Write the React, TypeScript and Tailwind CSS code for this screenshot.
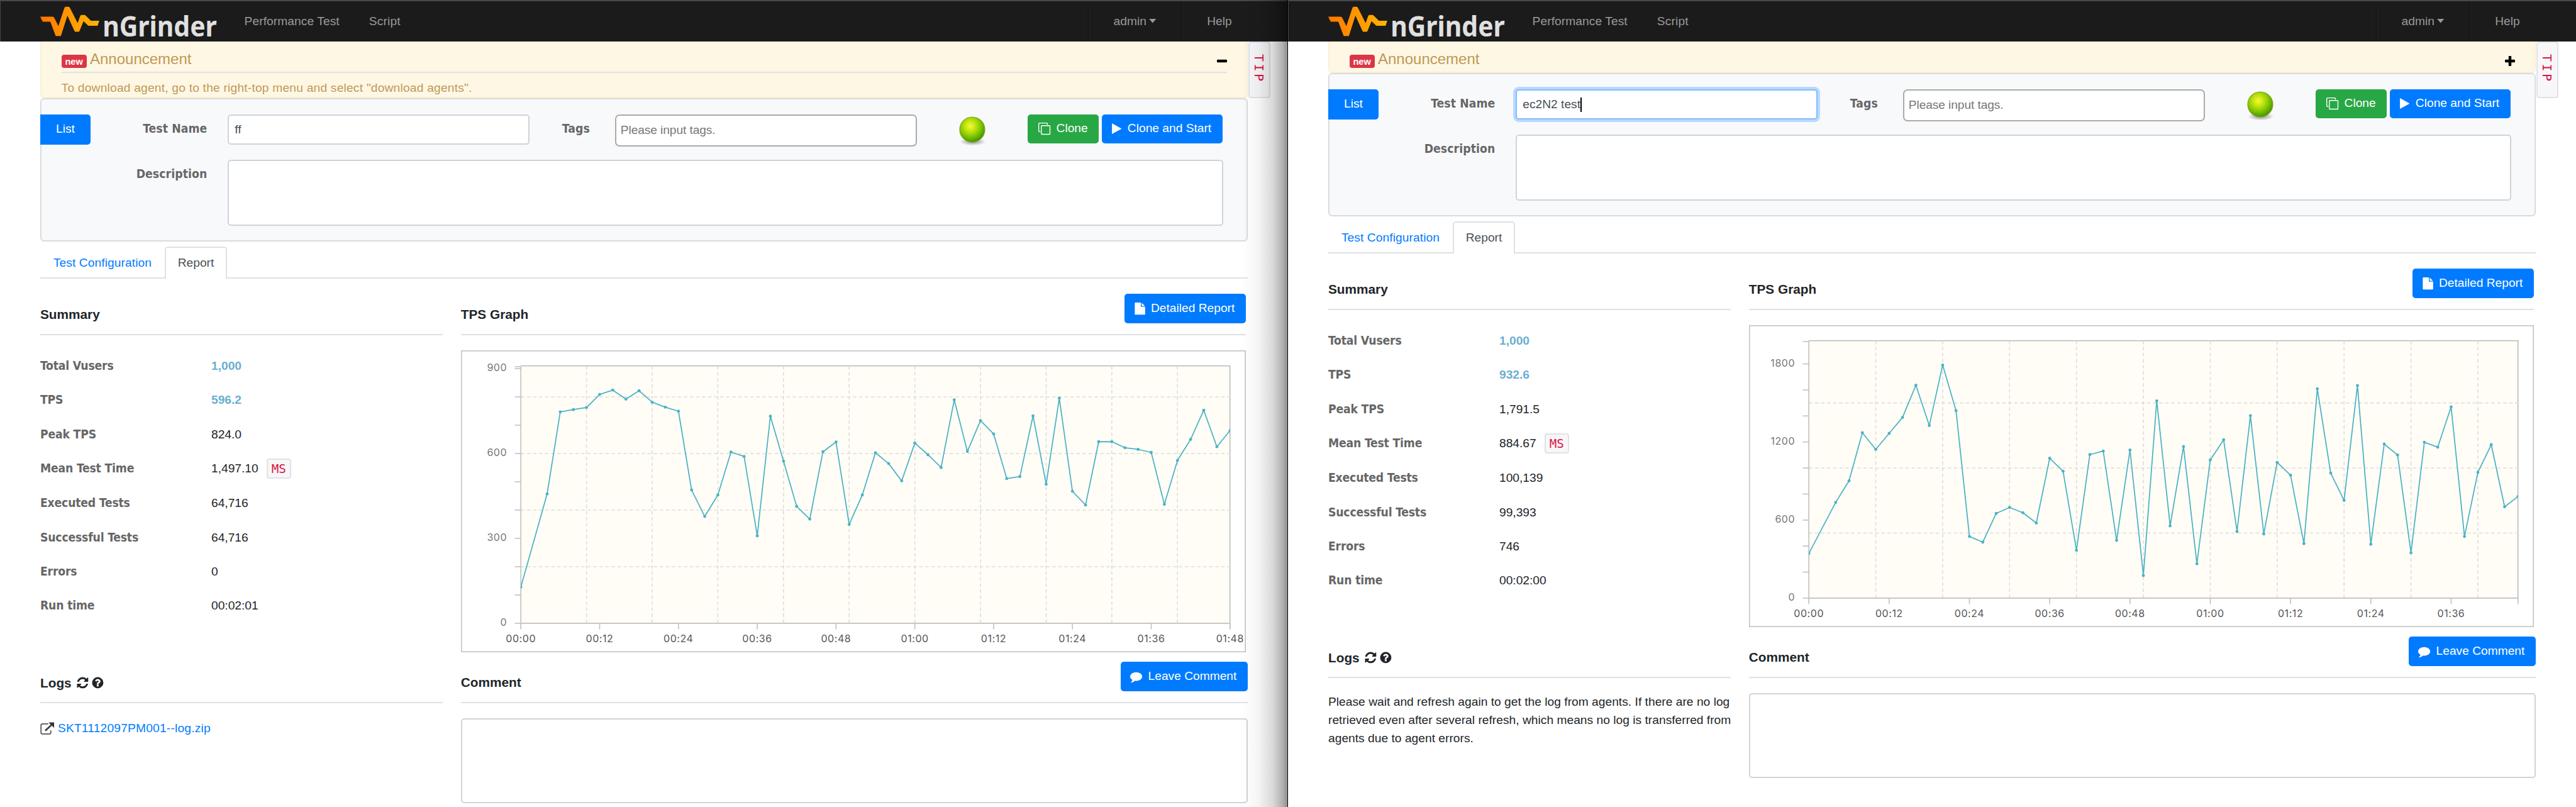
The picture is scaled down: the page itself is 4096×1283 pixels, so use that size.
import React from "react";

type SeriesPoint = [number, number];

type ChartConfig = {
  id: string;
  points: SeriesPoint[];
  duration: number;
  unitsPerTps: number;
  tickStep: number;
  labelStep: number;
  gridStep: number;
  max: number;
};

type PanelConfig = {
  expanded: boolean;
  testName: string;
  focused: boolean;
  rows: { label: string; value: string; highlight?: boolean; unit?: string }[];
  chart: ChartConfig;
  logFile?: string;
};

/* Samples are taken every two seconds; the first interval is four seconds long. */
const toPoints = (values: number[]): SeriesPoint[] =>
  values.map((v, i) => [i === 0 ? 0 : 2 + i * 2, v]);

const leftSeries = toPoints([
  127.9, 457, 747, 755, 762.4, 808.6, 824, 792, 821.6, 781.3, 763.6, 749.4, 471.2, 377.6, 453.4, 605,
  589.6, 309, 731.6, 573, 413.2, 368.2, 606.1, 640.5, 349.2, 453.4, 602.6, 564.7, 503.1, 636.9, 595.5,
  550.5, 789.6, 607.3, 716.2, 668.9, 511.4, 518.5, 732.8, 491.3, 795.5, 466.4, 417.9, 641.6, 641.6,
  620.3, 614.4, 603.8, 420.3, 575.3, 649.9, 752.9, 623.9, 680.7,
]);

const rightSeries = toPoints([
  343, 735, 901, 1271, 1143, 1266, 1389, 1636, 1326, 1791.5, 1440, 474, 430, 651, 697, 656, 577, 1075,
  975, 367.5, 1103, 1130, 444, 1138, 174, 1516, 555, 1165, 264, 1062, 1217, 512, 1402, 493, 1043, 945,
  419, 1609, 961, 751, 1634, 414, 1184, 1100, 348.5, 1198, 1160, 1470, 474, 966.5, 1179, 702, 781,
]);

const ICONS = {
  refresh:
    "M1639 1056q0 5-1 7-64 268-268 434.5t-478 166.5q-146 0-282.5-55t-243.5-157l-129 129q-19 19-45 19t-45-19-19-45v-448q0-26 19-45t45-19h448q26 0 45 19t19 45-19 45l-137 137q71 66 161 102t187 36q134 0 250-65t186-179q11-17 53-117 8-23 30-23h192q13 0 22.5 9.5t9.5 22.5zm25-800v448q0 26-19 45t-45 19h-448q-26 0-45-19t-19-45 19-45l138-138q-148-137-349-137-134 0-250 65t-186 179q-11 17-53 117-8 23-30 23h-199q-13 0-22.5-9.5t-9.5-22.5v-7q65-268 270-434.5t480-166.5q146 0 284 55.5t245 156.5l130-129q19-19 45-19t45 19 19 45z",
  question:
    "M1024 1376v-192q0-14-9-23t-23-9h-192q-14 0-23 9t-9 23v192q0 14 9 23t23 9h192q14 0 23-9t9-23zm256-672q0-88-55.5-163t-138.5-116-170-41q-243 0-371 213-15 24 8 42l132 100q7 6 19 6 16 0 25-12 53-68 86-92 34-24 86-24 48 0 85.5 26t37.5 59q0 38-20 61t-68 45q-63 28-115.5 86.5t-52.5 125.5v36q0 14 9 23t23 9h192q14 0 23-9t9-23q0-19 21.5-49.5t54.5-49.5q32-18 49-28.5t46-35 44.5-48 28-60.5 12.5-81zm384 192q0 209-103 385.5t-279.5 279.5-385.5 103-385.5-103-279.5-279.5-103-385.5 103-385.5 279.5-279.5 385.5-103 385.5 103 279.5 279.5 103 385.5z",
  file:
    "M1152 512v-472q22 14 36 28l408 408q14 14 28 36h-472zm-128 32q0 40 28 68t68 28h544v1056q0 40-28 68t-68 28h-1344q-40 0-68-28t-28-68v-1600q0-40 28-68t68-28h800v544z",
  comment:
    "M1792 896q0 174-120 321.5t-326 233-450 85.5q-70 0-145-8-198 175-460 242-49 14-114 22-17 2-30.5-9t-17.5-29v-1q-3-4-.5-12t2-10 4.5-9.5l6-9 7-8.5 8-9q7-8 31-34.5t34.5-38 31-39.5 32.5-51 27-59 26-76q-157-89-247.5-220t-90.5-281q0-130 71-248.5t191-204.5 286-136.5 348-50.5q244 0 450 85.5t326 233 120 321.5z",
  play: "M1576 927l-1328 738q-23 13-39.5 3t-16.5-36v-1472q0-26 16.5-36t39.5 3l1328 738q23 13 23 31t-23 31z",
  clone:
    "M1664 1632v-1088q0-13-9.5-22.5t-22.5-9.5h-1088q-13 0-22.5 9.5t-9.5 22.5v1088q0 13 9.5 22.5t22.5 9.5h1088q13 0 22.5-9.5t9.5-22.5zm128-1088v1088q0 66-47 113t-113 47h-1088q-66 0-113-47t-47-113v-1088q0-66 47-113t113-47h1088q66 0 113 47t47 113zm-384-384v160h-128v-160q0-13-9.5-22.5t-22.5-9.5h-1088q-13 0-22.5 9.5t-9.5 22.5v1088q0 13 9.5 22.5t22.5 9.5h160v128h-160q-66 0-113-47t-47-113v-1088q0-66 47-113t113-47h1088q66 0 113 47t47 113z",
};

function Icon({ name, className }: { name: keyof typeof ICONS; className: string }) {
  return (
    <svg viewBox="0 0 1792 1792" className={className} fill="currentColor" overflow="visible">
      <path d={ICONS[name]} />
    </svg>
  );
}

function Logo({ id }: { id: string }) {
  return (
    <svg viewBox="80 2 360 80" className="h-[64px] w-[288px] shrink-0 overflow-visible">
      <defs>
        <linearGradient id={`${id}-logo`} x1="0" x2="1" y1="0" y2="0">
          <stop offset="0" stopColor="#ff7600" />
          <stop offset="0.5" stopColor="#ff9800" />
          <stop offset="1" stopColor="#ffb400" />
        </linearGradient>
      </defs>
      <path
        fill={`url(#${id}-logo)`}
        d="M80 32.7H104q3 0 4.200 3L116 51.500L128 15q.8-2 2.600-2h5.800q1.800 0 2.600 2L154.300 45.500L159.300 31.300q.8-2 2.700-2h5.300q1.800 0 3.200 1.400L180.700 40.700H197.300L194 50.700H177.500q-2 0-3.200-1.200L166 41.700L158 61q-.7 1.700-2.500 1.700h-5q-1.800 0-2.500-1.700L134 30.500L121 71H110.700L100 42.700H84.700Z"
      />
      <text
        x="204"
        y="71.500"
        textLength="227"
        lengthAdjust="spacingAndGlyphs"
        fill="#e0e0e0"
        fontSize="57"
        fontWeight="700"
        fontFamily="'Noto Sans', sans-serif"
      >
        nGrinder
      </text>
    </svg>
  );
}

function Navbar({ id }: { id: string }) {
  return (
    <nav className="flex h-[65.6px] shrink-0 border-t-2 border-l border-[#474747] bg-[#1b1b1b] text-[19.2px] text-[#999999]">
      <div className="flex flex-1 items-center pl-[63px]">
        <Logo id={id} />
        <span className="ml-[36.6px] pt-[1px] tracking-[0.070px]">Performance Test</span>
        <span className="ml-[47px] pt-[1px] tracking-[0.150px]">Script</span>
      </div>
      <div className="flex w-[149px] items-center border-l border-[#0e0e0e] pt-[1px] shadow-[inset_1px_0_0_#272727]">
        <span className="ml-[39.4px]">admin</span>
        <svg viewBox="0 0 12 7" className="mb-[2px] ml-[4px] h-[6.500px] w-[11.500px]">
          <path d="M0 0H12L6 7Z" fill="#999999" />
        </svg>
      </div>
      <div className="flex w-[168.8px] items-center border-l border-[#0e0e0e] pt-[1px] pl-[39px] shadow-[inset_1px_0_0_#272727]">
        Help
      </div>
    </nav>
  );
}

function Announcement({ expanded }: { expanded: boolean }) {
  return (
    <div
      className={
        (expanded ? "h-[90.4px]" : "h-[50.4px]") +
        " flex w-[1920px] shrink-0 flex-col rounded-b-[6px] border-2 border-t-0 border-[#fbeed5] bg-[#fdf7e3] pr-[31.200px] pl-[31.600px] text-[#c09853] [text-shadow:0_1.600px_0_rgba(255,255,255,0.5)]"
      }
    >
      <div
        className={
          (expanded ? "border-b-2 border-[#dee2e6]" : "") + " flex h-[50.4px] shrink-0 items-start"
        }
      >
        <span className="mt-[21px] flex h-[21.600px] w-[40px] items-center justify-center rounded-[4px] bg-[#dc3545] pt-[2px] text-[14.600px] leading-none font-bold text-white [text-shadow:none]">
          new
        </span>
        <span className="mt-[12.500px] ml-[5.400px] text-[24px] leading-[32px]">Announcement</span>
        <svg viewBox="0 0 16 16" className="mt-[23.700px] ml-auto h-[16px] w-[16px]">
          <rect x="0" y="5.800" width="16" height="4.400" rx="1.200" fill="#000" />
          {!expanded && <rect x="5.800" y="0" width="4.400" height="16" rx="1.200" fill="#000" />}
        </svg>
      </div>
      {expanded && (
        <div className="pt-[12px] text-[19.200px] leading-[24px] tracking-[0.210px]">
          To download agent, go to the right-top menu and select "download agents".
        </div>
      )}
    </div>
  );
}

function StatusBall({ id }: { id: string }) {
  return (
    <svg viewBox="0 0 60 64" className="h-[51.200px] w-[48px]">
      <defs>
        <radialGradient id={`${id}-ball`} cx="0.42" cy="0.36" r="0.62">
          <stop offset="0" stopColor="#f6fb32" />
          <stop offset="0.35" stopColor="#c0e411" />
          <stop offset="0.65" stopColor="#86c903" />
          <stop offset="1" stopColor="#4a9a00" />
        </radialGradient>
        <radialGradient id={`${id}-shade`}>
          <stop offset="0" stopColor="#000" stopOpacity="0.45" />
          <stop offset="1" stopColor="#000" stopOpacity="0" />
        </radialGradient>
      </defs>
      <ellipse cx="31" cy="54" rx="26" ry="8" fill={`url(#${id}-shade)`} />
      <circle cx="30" cy="30" r="25" fill={`url(#${id}-ball)`} stroke="#7da51c" strokeWidth="1.500" />
    </svg>
  );
}

const fieldLabel =
  "text-right font-['DejaVu_Sans_Condensed','DejaVu_Sans',sans-serif] text-[19.200px] leading-[46.400px] font-bold tracking-[0.100px] text-[#666666] [font-stretch:condensed]";

function TestForm({ id, panel }: { id: string; panel: PanelConfig }) {
  return (
    <div className="flex h-[228px] w-[1920px] shrink-0 flex-col rounded-[6px] border-2 border-[#d9dbde] bg-[#f8f9fb] pt-[23.600px]">
      <div className="flex h-[72px] items-start">
        <button className="-ml-[2px] h-[48px] w-[80px] rounded-r-[5px] bg-[#007bff] text-[19.200px] text-white">
          List
        </button>
        <div className={fieldLabel + " w-[185.400px]"}>Test Name</div>
        <div
          className={
            (panel.focused
              ? "border-[#80bdff] shadow-[0_0_0_4px_rgba(0,123,255,0.25)]"
              : "border-[#ced4da]") +
            " ml-[32.400px] flex h-[48px] w-[480px] items-center rounded-[5px] border-2 bg-white pt-[1px] pl-[9.500px] text-[19.200px] text-[#495057]"
          }
        >
          {panel.testName}
          {panel.focused && <span className="h-[23px] w-[1.600px] bg-black" />}
        </div>
        <div className={fieldLabel + " w-[96px]"}>Tags</div>
        <div className="ml-[40px] flex h-[51.200px] w-[480px] items-center rounded-[7px] border-2 border-[#aaaaaa] bg-white pl-[7px] text-[19.200px] tracking-[-0.100px] text-[#777777]">
          Please input tags.
        </div>
        <div className="ml-[64.500px] w-[48px]">
          <StatusBall id={id} />
        </div>
        <button className="ml-[64px] flex h-[46.400px] w-[112.300px] items-center rounded-[5px] bg-[#28a745] pl-[16.300px] text-[19.200px] text-white">
          <Icon name="clone" className="h-[19.200px] w-[19.200px]" />
          <span className="ml-[9.800px]">Clone</span>
        </button>
        <button className="ml-[5.400px] flex h-[46.400px] w-[192.200px] items-center rounded-[5px] bg-[#007bff] pl-[14.200px] text-[19.200px] text-white">
          <Icon name="play" className="h-[19.200px] w-[19.200px]" />
          <span className="ml-[7.500px] whitespace-nowrap">Clone and Start</span>
        </button>
      </div>
      <div className="flex">
        <div className={fieldLabel + " w-[263.400px]"}>Description</div>
        <div className="ml-[32.400px] h-[105.600px] w-[1583.600px] rounded-[5px] border-2 border-[#ced4da] bg-white" />
      </div>
    </div>
  );
}

function Tabs() {
  return (
    <div className="mt-[8px] flex h-[51.200px] w-[1920px] shrink-0 text-[19.200px]">
      <div className="flex w-[197.900px] items-center justify-center border-b-2 border-[#dee2e6] pt-[3px] tracking-[0.080px] text-[#007bff]">
        Test Configuration
      </div>
      <div className="flex w-[99.300px] items-center justify-center rounded-t-[5px] border-2 border-b-0 border-[#dee2e6] text-[#495057]">
        Report
      </div>
      <div className="flex-1 border-b-2 border-[#dee2e6]" />
    </div>
  );
}

function Summary({ rows }: { rows: PanelConfig["rows"] }) {
  return (
    <div className="w-[640px]">
      <div className="flex h-[89.600px] items-center border-b-2 border-[#dee2e6] pt-[26px] text-[20.800px] font-bold text-[#212529]">
        Summary
      </div>
      <div className="pt-[22px]">
        {rows.map((row) => (
          <div
            key={row.label}
            className={(row.unit ? "h-[55.200px]" : "h-[54.400px]") + " flex items-start text-[19.200px] leading-[54.400px]"}
          >
            <span className="w-[272px] font-['DejaVu_Sans_Condensed','DejaVu_Sans',sans-serif] font-bold tracking-[-0.180px] text-[#666666] [font-stretch:condensed]">
              {row.label}
            </span>
            <span className={row.highlight ? "font-bold text-[#6bafd2]" : "text-[#212529]"}>{row.value}</span>
            {row.unit && (
              <span className="mt-[11.500px] ml-[13px] flex h-[32px] w-[39.200px] items-center justify-center rounded-[4px] border-2 border-[#e1e1e8] bg-[#f7f7f9] font-['DejaVu_Sans_Mono',monospace] text-[19.200px] leading-none text-[#dd1144]">
                {row.unit}
              </span>
            )}
          </div>
        ))}
      </div>
    </div>
  );
}

const clock = (s: number) =>
  `${String(Math.floor(s / 60)).padStart(2, "0")}:${String(s % 60).padStart(2, "0")}`;

const range = (from: number, to: number, step: number) => {
  const out: number[] = [];
  for (let v = from; v <= to; v += step) out.push(v);
  return out;
};

function TpsChart({ chart }: { chart: ChartConfig }) {
  const left = 119;
  const top = 31;
  const right = 1528.5;
  const bottom = 542.4;
  const px = (t: number) => left + (t / chart.duration) * (right - left);
  const py = (v: number) => bottom - v * chart.unitsPerTps;
  const ticks = range(0, chart.max, chart.tickStep);
  const labels = range(0, chart.max, chart.labelStep);
  const hGrid = range(chart.gridStep, chart.max - 1, chart.gridStep);
  const vGrid = range(10, chart.duration - 1, 10);
  const xLabels = range(0, chart.duration, 12);
  return (
    <svg viewBox="0 0 1560 600" className="mt-[24px] block h-[480px] w-[1248px]">
      <defs>
        <clipPath id={`${chart.id}-clip`}>
          <rect x={left} y={top} width={right - left} height={bottom - top} />
        </clipPath>
      </defs>
      <rect x="1" y="1" width="1558" height="598" fill="#fff" stroke="#c3c3c3" strokeWidth="2" />
      <rect x={left} y={top} width={right - left} height={bottom - top} fill="#fffdf6" />
      <path d={`M${left} ${top}H${right}V${bottom}`} fill="none" stroke="#999999" strokeWidth="1.300" />
      <g stroke="#dddddd" strokeWidth="2" strokeDasharray="7 5">
        {hGrid.map((v) => (
          <path key={v} d={`M${left} ${py(v)}H${right}`} />
        ))}
        {vGrid.map((t) => (
          <path key={t} d={`M${px(t)} ${top}V${bottom}`} />
        ))}
      </g>
      <g stroke="#c0c0c0" strokeWidth="2" fill="none">
        <path d={`M${left - 12} ${top + 1.5}H${left}V${bottom}H${right}`} />
        {ticks.map((v) => (
          <path key={v} d={`M${left - 12} ${py(v)}H${left}`} />
        ))}
        {[...xLabels, chart.duration].map((t, i) => (
          <path key={i} d={`M${px(t)} ${bottom}V${bottom + 12}`} />
        ))}
      </g>
      <g clipPath={`url(#${chart.id}-clip)`}>
        <polyline
          fill="none"
          stroke="#4bb2c5"
          strokeWidth="2.200"
          strokeLinejoin="round"
          points={chart.points.map(([t, v]) => `${px(t)},${py(v)}`).join(" ")}
        />
        {chart.points.map(([t, v]) => (
          <circle key={t} cx={px(t)} cy={py(v)} r="3" fill="#4bb2c5" />
        ))}
      </g>
      <g fontFamily="Inter, sans-serif" fontSize="20" letterSpacing="0.700">
        {labels.map((v) => (
          <text key={v} x="91.500" y={py(v) + 5} textAnchor="end" fill="#777777">
            {v}
          </text>
        ))}
        {xLabels.map((t) => (
          <text key={t} x={px(t)} y="579.500" textAnchor="middle" fill="#555555">
            {clock(t)}
          </text>
        ))}
      </g>
    </svg>
  );
}

function LinkIcon() {
  return (
    <svg viewBox="0 0 28 25" className="h-[20px] w-[22.400px]" fill="none">
      <path d="M16 3.500H4.500Q1.500 3.500 1.500 6.500V20.500Q1.500 23.500 4.500 23.500H18Q21 23.500 21 20.500V16.500" stroke="#555555" strokeWidth="2.200" />
      <path d="M10 17L22 6" stroke="#444444" strokeWidth="3.600" />
      <path d="M16.500 0.500H27.500V11.500Z" fill="#333333" />
    </svg>
  );
}

function Panel({ id, panel }: { id: string; panel: PanelConfig }) {
  return (
    <section className="relative flex h-[1283px] w-[2048px] shrink-0 flex-col overflow-hidden bg-white">
      <Navbar id={id} />
      <main className="ml-[64px] flex w-[1920px] flex-col">
        <Announcement expanded={panel.expanded} />
        <TestForm id={id} panel={panel} />
        <Tabs />
        <div className="flex h-[593.600px] shrink-0 gap-[28.800px]">
          <Summary rows={panel.rows} />
          <div className="w-[1248px]">
            <div className="flex h-[89.600px] items-start justify-between border-b-2 border-[#dee2e6]">
              <h2 className="pt-[42.800px] text-[20.800px] leading-[28px] font-bold text-[#212529]">TPS Graph</h2>
              <button className="mt-[24px] flex h-[46.400px] w-[192.800px] items-center rounded-[5px] bg-[#007bff] pl-[14.800px] text-[19.200px] text-white">
                <Icon name="file" className="h-[19.200px] w-[19.200px]" />
                <span className="ml-[8px] whitespace-nowrap">Detailed Report</span>
              </button>
            </div>
            <TpsChart chart={panel.chart} />
          </div>
        </div>
        <div className="flex shrink-0 gap-[28.800px]">
          <div className="w-[640px]">
            <div className="flex h-[81.600px] items-center border-b-2 border-[#dee2e6] pt-[17.400px] text-[20.800px] font-bold text-[#212529]">
              <span>Logs</span>
              <Icon name="refresh" className="ml-[7.500px] h-[20.800px] w-[20.800px]" />
              <Icon name="question" className="ml-[3px] h-[20.800px] w-[20.800px]" />
            </div>
            {panel.logFile ? (
              <div className="mt-[25.400px] flex items-center gap-[5.500px] text-[19.200px] leading-[28px] tracking-[0.200px] text-[#007bff]">
                <LinkIcon />
                <span>{panel.logFile}</span>
              </div>
            ) : (
              <div className="mt-[24px] text-[19.200px] leading-[28.800px] tracking-[0.020px] text-[#212529]">
                <p className="whitespace-nowrap">Please wait and refresh again to get the log from agents. If there are no log</p>
                <p className="whitespace-nowrap">retrieved even after several refresh, which means no log is transferred from</p>
                <p className="whitespace-nowrap">agents due to agent errors.</p>
              </div>
            )}
          </div>
          <div className="w-[1251.200px]">
            <div className="flex h-[81.600px] items-start justify-between border-b-2 border-[#dee2e6]">
              <h2 className="pt-[34.500px] text-[20.800px] leading-[28px] font-bold text-[#212529]">Comment</h2>
              <button className="mt-[15.700px] flex h-[46.400px] w-[202.400px] items-center rounded-[5px] bg-[#007bff] pl-[15.800px] text-[19.200px] text-white">
                <Icon name="comment" className="h-[19.200px] w-[19.200px]" />
                <span className="ml-[9px] whitespace-nowrap">Leave Comment</span>
              </button>
            </div>
            <div className="mt-[24px] h-[134.400px] rounded-[5px] border-2 border-[#ced4da] bg-white" />
          </div>
        </div>
      </main>
      <div className="absolute top-[65.600px] left-[1984.500px] flex h-[90px] w-[35.200px] items-center justify-center rounded-[4px] border-2 border-[#e1e1e8] bg-[#f7f7f9]">
        <span className="-mt-[2px] font-['DejaVu_Sans_Mono',monospace] text-[20px] leading-none tracking-[3.400px] text-[#dd1144] [writing-mode:vertical-rl]">
          TIP
        </span>
      </div>
    </section>
  );
}

const leftPanel: PanelConfig = {
  expanded: true,
  testName: "ff",
  focused: false,
  rows: [
    { label: "Total Vusers", value: "1,000", highlight: true },
    { label: "TPS", value: "596.2", highlight: true },
    { label: "Peak TPS", value: "824.0" },
    { label: "Mean Test Time", value: "1,497.10", unit: "MS" },
    { label: "Executed Tests", value: "64,716" },
    { label: "Successful Tests", value: "64,716" },
    { label: "Errors", value: "0" },
    { label: "Run time", value: "00:02:01" },
  ],
  chart: {
    id: "left-chart",
    points: leftSeries,
    duration: 108,
    unitsPerTps: 0.5624,
    tickStep: 100,
    labelStep: 300,
    gridStep: 200,
    max: 900,
  },
  logFile: "SKT1112097PM001--log.zip",
};

const rightPanel: PanelConfig = {
  expanded: false,
  testName: "ec2N2 test",
  focused: true,
  rows: [
    { label: "Total Vusers", value: "1,000", highlight: true },
    { label: "TPS", value: "932.6", highlight: true },
    { label: "Peak TPS", value: "1,791.5" },
    { label: "Mean Test Time", value: "884.67", unit: "MS" },
    { label: "Executed Tests", value: "100,139" },
    { label: "Successful Tests", value: "99,393" },
    { label: "Errors", value: "746" },
    { label: "Run time", value: "00:02:00" },
  ],
  chart: {
    id: "right-chart",
    points: rightSeries,
    duration: 106,
    unitsPerTps: 0.2586,
    tickStep: 200,
    labelStep: 600,
    gridStep: 500,
    max: 1800,
  },
};

export default function App() {
  return (
    <div className="flex h-[1283px] w-[4096px] overflow-hidden bg-white font-['Liberation_Sans',Arial,sans-serif] leading-normal">
      <div className="relative">
        <Panel id="left" panel={leftPanel} />
        <div className="absolute top-0 right-0 h-full w-[74px] border-r border-black bg-[linear-gradient(to_right,rgba(0,0,0,0)_0%,rgba(0,0,0,0.04)_36%,rgba(0,0,0,0.15)_68%,rgba(0,0,0,0.3)_89%,rgba(0,0,0,0.44)_100%)]" />
      </div>
      <Panel id="right" panel={rightPanel} />
    </div>
  );
}
